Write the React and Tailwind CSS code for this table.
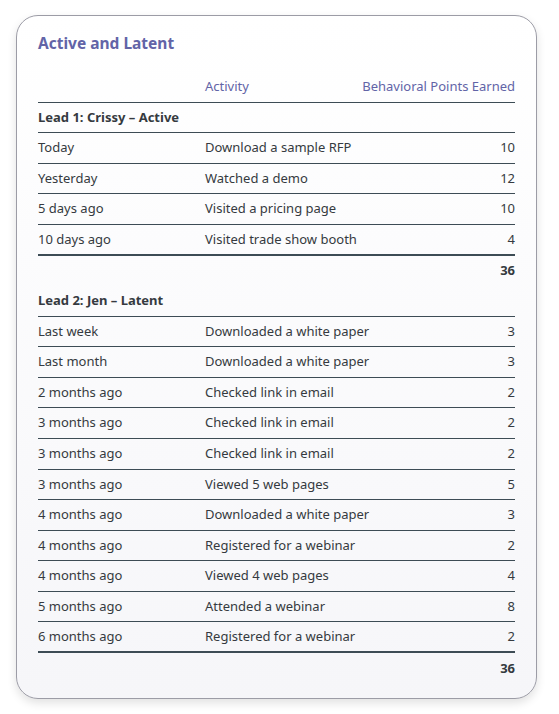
import React from "react";

const lead1 = [
  { when: "Today", what: "Download a sample RFP", pts: 10 },
  { when: "Yesterday", what: "Watched a demo", pts: 12 },
  { when: "5 days ago", what: "Visited a pricing page", pts: 10 },
  { when: "10 days ago", what: "Visited trade show booth", pts: 4 },
];

const lead2 = [
  { when: "Last week", what: "Downloaded a white paper", pts: 3 },
  { when: "Last month", what: "Downloaded a white paper", pts: 3 },
  { when: "2 months ago", what: "Checked link in email", pts: 2 },
  { when: "3 months ago", what: "Checked link in email", pts: 2 },
  { when: "3 months ago", what: "Checked link in email", pts: 2 },
  { when: "3 months ago", what: "Viewed 5 web pages", pts: 5 },
  { when: "4 months ago", what: "Downloaded a white paper", pts: 3 },
  { when: "4 months ago", what: "Registered for a webinar", pts: 2 },
  { when: "4 months ago", what: "Viewed 4 web pages", pts: 4 },
  { when: "5 months ago", what: "Attended a webinar", pts: 8 },
  { when: "6 months ago", what: "Registered for a webinar", pts: 2 },
];

const Row = ({ when, what, pts, last }) => (
  <div
    className={`grid grid-cols-[167px_1fr_60px] items-center h-[30.6px] border-[#3d4c55] ${
      last ? "border-b-2" : "border-b"
    }`}
  >
    <span>{when}</span>
    <span>{what}</span>
    <span className="text-right">{pts}</span>
  </div>
);

const Section = ({ title, rows }) => {
  const total = rows.reduce((s, r) => s + r.pts, 0);
  return (
    <div>
      <div className="flex items-center h-[30.6px] border-b border-[#3d4c55] font-bold">
        {title}
      </div>
      {rows.map((r, i) => (
        <Row key={i} {...r} last={i === rows.length - 1} />
      ))}
      <div className="flex items-center justify-end h-[30.4px] font-bold">{total}</div>
    </div>
  );
};

export default function App() {
  return (
    <div className="bg-white min-h-[714px] pt-[15px] px-[16px] font-['Noto_Sans',sans-serif]">
      <div className="w-[521px] rounded-[22px] border border-[#9c9ca6] bg-gradient-to-b from-white to-[#f6f6f9] shadow-[0_4px_10px_rgba(0,0,0,0.12)] px-[21px] pt-[15px] pb-[15px] text-[13px] text-[#353a40]">
        <h1 className="text-[15.5px] leading-[24px] font-bold text-[#6264a7]">Active and Latent</h1>

        <div className="mt-[17px] grid grid-cols-[167px_1fr_auto] items-center h-[30.6px] border-b border-[#3d4c55] text-[#6264a7]">
          <span></span>
          <span>Activity</span>
          <span className="text-right">Behavioral Points Earned</span>
        </div>

        <Section title="Lead 1: Crissy – Active" rows={lead1} />
        <Section title="Lead 2: Jen – Latent" rows={lead2} />
      </div>
    </div>
  );
}
